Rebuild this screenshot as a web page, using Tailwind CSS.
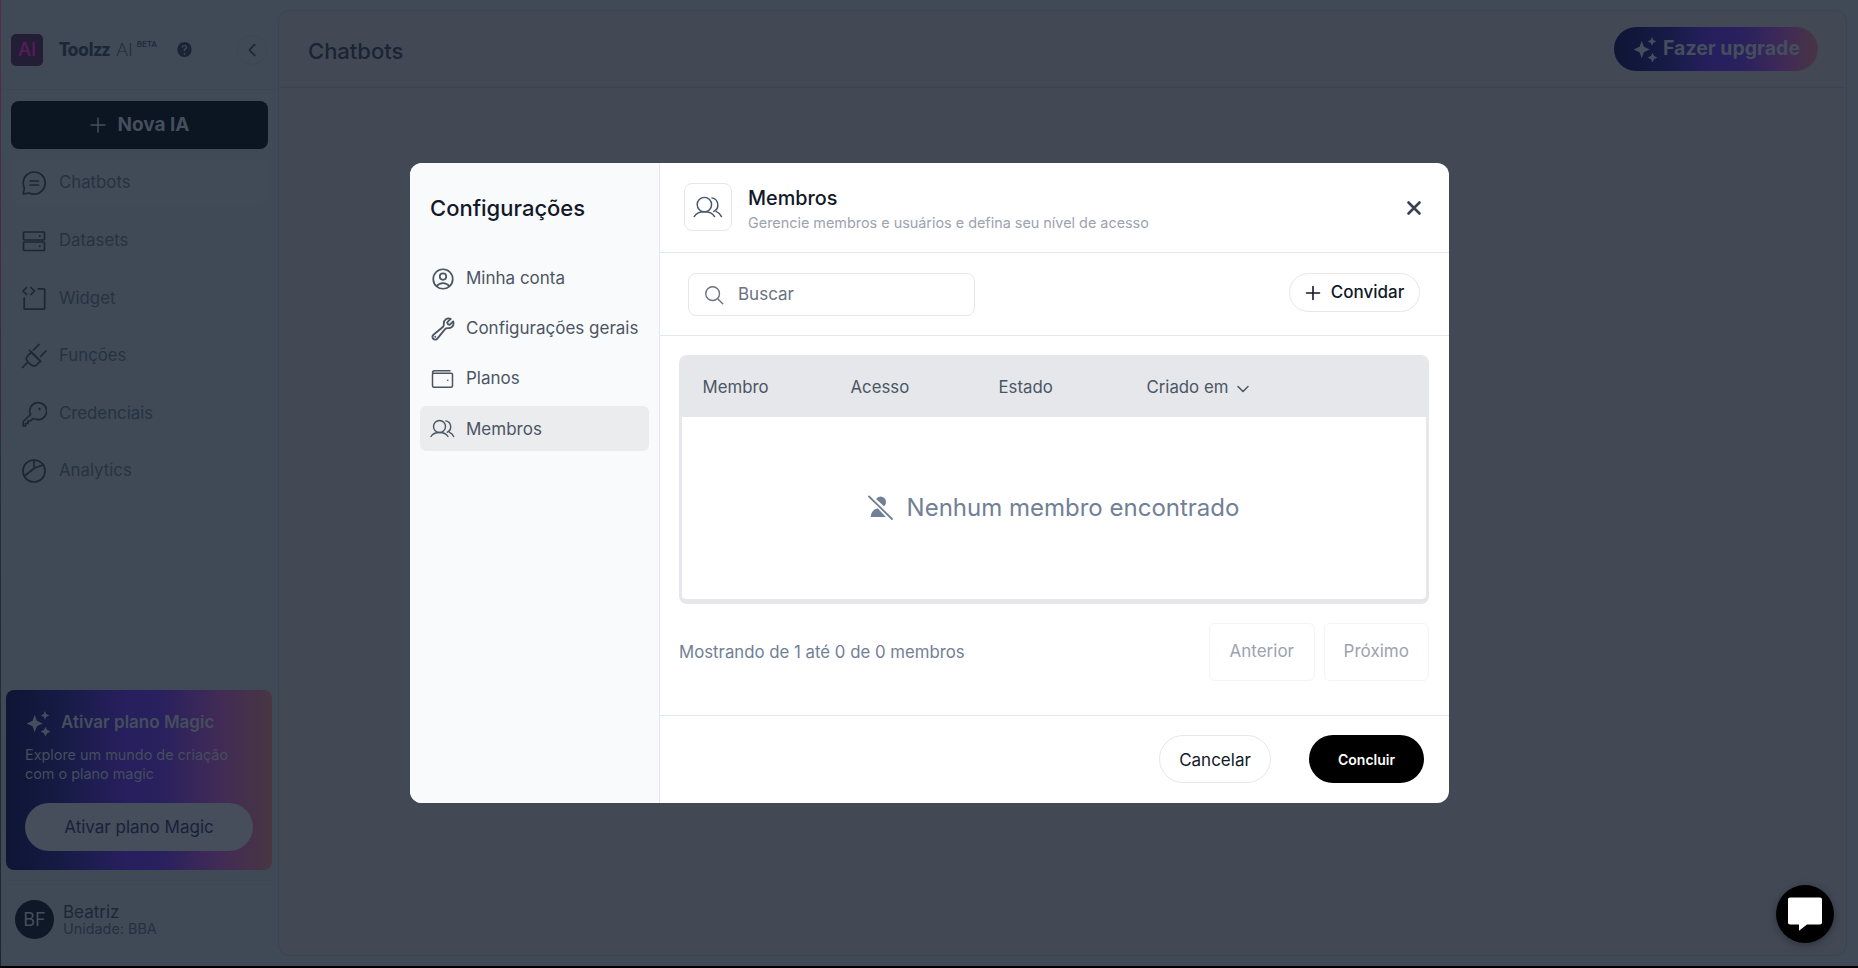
<!DOCTYPE html>
<html lang="pt-BR">
<head>
<meta charset="utf-8">
<script src="https://cdn.jsdelivr.net/npm/@tailwindcss/browser@4"></script>
<title>Toolzz AI</title>
</head>
<body class="overflow-hidden bg-black font-['Inter','Liberation_Sans',sans-serif]">
<div class="relative flex h-[968px] w-[1858px] flex-col overflow-hidden">
  <div class="flex min-h-0 flex-1">
    <div class="w-[1px] shrink-0 bg-gradient-to-b from-[#5a2c48] via-[#2a2c38] to-[#1f2530]"></div>
    <!-- sidebar -->
    <aside class="flex w-[277px] shrink-0 flex-col bg-[#3f4a56]">
      <div class="flex h-[90px] shrink-0 items-center border-b border-[#3c4753] pl-[10px] pt-[10px]">
        <div class="flex h-[32px] w-[32px] shrink-0 items-center justify-center rounded-[5px] bg-[#231d36] text-[18px] font-semibold text-[#541d57]">AI</div>
        <div class="ml-[16px] flex w-[116px] shrink-0 items-start text-[#1c2736]">
          <span class="text-[18px] font-extrabold font-['Lato',sans-serif]">Toolzz</span>
          <span class="ml-[6px] text-[18px] font-light font-['Lato',sans-serif]">AI</span>
          <span class="ml-[4px] mt-[2px] text-[8px] font-medium">BETA</span>
        </div>
        <svg class="ml-[1px] h-[17px] w-[17px] shrink-0" viewBox="0 0 24 24"><path fill="#1a2433" fill-rule="evenodd" d="M12 1.500C6.200 1.500 2 5.900 2 12s4.200 10.500 10 10.500S22 18.100 22 12 17.800 1.500 12 1.500Zm0 15.200a1.300 1.300 0 1 1 0 2.600 1.300 1.300 0 0 1 0-2.600Zm-.1-11.200c2.300 0 3.900 1.300 3.900 3.300 0 1.400-.8 2.200-1.800 2.900-.8.600-1.100.9-1.100 1.700v.6h-2v-.8c0-1.400.6-2.100 1.600-2.800.8-.5 1.300-.9 1.300-1.600 0-.8-.7-1.400-1.800-1.400-1.100 0-1.900.6-2 1.700H8c.1-2.300 1.700-3.600 3.900-3.600Z"/></svg>
        <div class="ml-[44px] flex h-[30px] w-[30px] shrink-0 items-center justify-center rounded-full border border-[#3c4753]">
          <svg class="h-[16px] w-[16px]" viewBox="0 0 24 24" fill="none" stroke="#1a2433" stroke-width="2.400" stroke-linecap="round" stroke-linejoin="round"><path d="M16 4 8 12l8 8"/></svg>
        </div>
      </div>
      <div class="px-[10px] pt-[11px]">
        <div class="flex h-[48px] w-[257px] items-center justify-center gap-[10px] rounded-[8px] bg-[#0c1522] text-[19px] font-bold text-[#454e5c]">
          <svg class="h-[18px] w-[18px]" viewBox="0 0 18 18" fill="none" stroke="#454e5c" stroke-width="1.500"><path d="M9 1.500v15M1.500 9h15"/></svg>
          <span>Nova IA</span>
        </div>
      </div>
      <nav class="mt-[10px] flex flex-col px-[10px] text-[16.800px] text-[#273241]">
        <div class="flex h-[47px] items-center gap-[12px] rounded-[8px] bg-[#404b57] pl-[10px]">
          <svg class="h-[26px] w-[26px] shrink-0" viewBox="0 0 26 26" fill="none" stroke="#1c2736" stroke-width="1.700" stroke-linecap="round" stroke-linejoin="round"><path d="M13.200 2C7 2 2.200 6.800 2.200 13c0 1.800.4 3.500 1.200 5l-1.200 5.200c-.1.500.2.800.7.700l5.100-.9c1.500.8 3.300 1.200 5.200 1.200 6.100 0 11-5 11-11.200S19.300 2 13.200 2Z"/><path d="M9 11h8.500M9 15h8.500"/></svg>
          <span>Chatbots</span>
        </div>
        <div class="mt-[11px] flex h-[47px] items-center gap-[12px] pl-[10px]">
          <svg class="h-[26px] w-[26px] shrink-0" viewBox="0 0 26 26" fill="none" stroke="#1c2736" stroke-width="1.700"><rect x="2.500" y="4" width="21" height="8" rx="1"/><rect x="2.500" y="14" width="21" height="8.500" rx="1"/><circle cx="18.800" cy="8" r="1" fill="#1c2736" stroke="none"/><circle cx="18.800" cy="18.200" r="1" fill="#1c2736" stroke="none"/></svg>
          <span>Datasets</span>
        </div>
        <div class="mt-[11px] flex h-[47px] items-center gap-[12px] pl-[10px]">
          <svg class="h-[26px] w-[26px] shrink-0" viewBox="0 0 26 26" fill="none" stroke="#1c2736" stroke-width="1.700" stroke-linecap="round" stroke-linejoin="round"><path d="M5.500 1.500 2 5l3.500 3.500M10 1.500 13.500 5 10 8.500"/><path d="M3.200 12v10.500c0 .4.300.7.700.7H23c.4 0 .7-.3.700-.7V3.500c0-.4-.3-.7-.7-.7h-5.700"/></svg>
          <span>Widget</span>
        </div>
        <div class="mt-[10px] flex h-[47px] items-center gap-[12px] pl-[10px]">
          <svg class="h-[26px] w-[26px] shrink-0" viewBox="0 0 26 26" fill="none" stroke="#1c2736" stroke-width="1.700" stroke-linecap="round" stroke-linejoin="round"><path d="m1.500 24.500 5.500-5.500M7 19c-2-2-2.200-4.300-.5-6l4-4 9 9-4 4c-1.700 1.700-4.500 1-6.500-1Z"/><path d="m18 1.500-5.500 5.500M25 8l-5.500 5.500M8.500 7.500l11 11"/></svg>
          <span>Funções</span>
        </div>
        <div class="mt-[11px] flex h-[47px] items-center gap-[12px] pl-[10px]">
          <svg class="h-[26px] w-[26px] shrink-0" viewBox="0 0 26 26" fill="none" stroke="#1c2736" stroke-width="1.700" stroke-linecap="round" stroke-linejoin="round"><path d="M9.300 13.300A8.500 8.500 0 1 1 14 18c-.8 0-1.600-.1-2.300-.3L9.500 20H7v2.500H4.500V25H2.200v-4.500l7.400-7Z"/><circle cx="18.500" cy="8" r="1.200" fill="#1c2736" stroke="none"/></svg>
          <span>Credenciais</span>
        </div>
        <div class="mt-[10px] flex h-[47px] items-center gap-[12px] pl-[10px]">
          <svg class="h-[26px] w-[26px] shrink-0" viewBox="0 0 26 26" fill="none" stroke="#1c2736" stroke-width="1.700" stroke-linecap="round" stroke-linejoin="round"><circle cx="13" cy="13" r="11"/><path d="M13 2v8.200M13 10.200l9.500-3.500M13 10.500 3.500 18"/></svg>
          <span>Analytics</span>
        </div>
      </nav>
      <div class="mt-auto px-[5px] pb-[10px]">
        <div class="flex h-[180px] w-[266px] flex-col rounded-[8px] bg-[linear-gradient(90deg,#0f1535_0%,#141a42_18%,#271f5e_45%,#29205e_58%,#412b56_80%,#483642_100%)] px-[19px]">
          <div class="mt-[20px] flex h-[26px] items-center gap-[9px]">
            <svg class="h-[27px] w-[27px] shrink-0" viewBox="0 0 25 25" fill="#454e5c"><path d="M9 4.500 11 10l5.500 2.500L11 15l-2 5.500L7 15l-5.500-2.500L7 10Z"/><path d="M18.500 1 19.700 3.800 22.500 5l-2.800 1.200-1.200 2.800-1.200-2.800L14.500 5l2.800-1.200Z"/><path d="M19 15.500l1.500 3 3 1.500-3 1.500-1.500 3-1.500-3-3-1.500 3-1.500Z"/></svg>
            <span class="text-[17px] font-semibold text-[#454e5c] whitespace-nowrap">Ativar plano Magic</span>
          </div>
          <p class="mt-[9px] text-[14.400px] leading-[19px] text-[#454e5c]">Explore um mundo de criação<br>com o plano magic</p>
          <div class="mt-[20px] flex h-[48px] w-[228px] items-center justify-center rounded-full bg-[#464d5b] pt-[1px] text-[17px] text-[#17223a]">Ativar plano Magic</div>
        </div>
        <div class="mt-[10px] flex h-[76px] items-center gap-[9px] border-t border-[#3c4753] pb-[7px] pl-[9px] pt-[8px]">
          <div class="flex h-[39px] w-[39px] shrink-0 items-center justify-center rounded-full bg-[#0e1827] text-[18px] text-[#454e5c]">BF</div>
          <div class="flex flex-col pt-[1px]">
            <span class="text-[17px] leading-[17px] text-[#1c2736]">Beatriz</span>
            <span class="text-[14.400px] leading-[15px] text-[#253040]">Unidade: BBA</span>
          </div>
        </div>
      </div>
    </aside>
    <!-- main -->
    <main class="min-w-0 flex-1 bg-[#3f4a56] pb-[10px] pr-[11px] pt-[10px]">
      <div class="h-full rounded-[12px] border border-[#3a4551] bg-[#424955]">
        <header class="flex h-[77px] items-center justify-between border-b border-[#3a4551] pl-[29px] pr-[28px]">
          <h1 class="mt-[4px] text-[22px] font-medium text-[#1a2433]">Chatbots</h1>
          <div class="flex h-[44px] w-[204px] items-center justify-center gap-[4px] rounded-full bg-[linear-gradient(90deg,#0f1535_0%,#141a42_22%,#271f5e_48%,#29205e_62%,#412b56_85%,#483642_100%)] text-[19.500px] font-bold text-[#454e5c]">
            <svg class="h-[27px] w-[27px] shrink-0" viewBox="0 0 25 25" fill="#454e5c"><path d="M9 4.500 11 10l5.500 2.500L11 15l-2 5.500L7 15l-5.500-2.500L7 10Z"/><path d="M18.500 1 19.700 3.800 22.500 5l-2.800 1.200-1.200 2.800-1.200-2.800L14.500 5l2.800-1.200Z"/><path d="M19 15.500l1.500 3 3 1.500-3 1.500-1.500 3-1.500-3-3-1.500 3-1.500Z"/></svg>
            <span class="whitespace-nowrap">Fazer upgrade</span>
          </div>
        </header>
      </div>
    </main>
  </div>
  <div class="h-[2px] shrink-0 bg-black"></div>

  <!-- modal -->
  <div class="absolute left-[410px] top-[163px] flex h-[640px] w-[1039px] overflow-hidden rounded-[12px] bg-white">
    <div class="flex w-[250px] shrink-0 flex-col border-r border-[#e5e7eb] bg-[#f9fafb] px-[10px]">
      <h2 class="ml-[10px] mt-[31px] text-[22px] leading-[28px] font-medium text-[#111827]">Configurações</h2>
      <div class="mt-[34px] flex flex-col text-[17px] text-[#4b5563]">
        <div class="flex h-[45px] items-center gap-[10px] pl-[10px]">
          <svg class="h-[26px] w-[26px] shrink-0" viewBox="0 0 24 24" fill="none" stroke="#4b5563" stroke-width="1.600" stroke-linecap="round" stroke-linejoin="round"><path d="M17.982 18.725A7.488 7.488 0 0 0 12 15.750a7.488 7.488 0 0 0-5.982 2.975m11.963 0a9 9 0 1 0-11.963 0m11.963 0A8.966 8.966 0 0 1 12 21a8.966 8.966 0 0 1-5.982-2.275M15 9.750a3 3 0 1 1-6 0 3 3 0 0 1 6 0Z"/></svg>
          <span>Minha conta</span>
        </div>
        <div class="mt-[5px] flex h-[45px] items-center gap-[10px] pl-[10px]">
          <svg class="h-[26px] w-[26px] shrink-0" viewBox="0 0 24 24" fill="none" stroke="#4b5563" stroke-width="1.700" stroke-linecap="round" stroke-linejoin="round"><path d="M21.750 6.750a4.500 4.500 0 0 1-4.884 4.484c-1.076-.091-2.264.071-2.950.904l-7.152 8.684a2.548 2.548 0 1 1-3.586-3.586l8.684-7.152c.833-.686.995-1.874.904-2.950a4.500 4.500 0 0 1 6.336-4.486l-3.276 3.276a3.004 3.004 0 0 0 2.250 2.250l3.276-3.276c.256.565.398 1.192.398 1.852Z"/><path d="M4.867 19.125h.008v.008h-.008v-.008Z"/></svg>
          <span class="whitespace-nowrap">Configurações gerais</span>
        </div>
        <div class="mt-[5px] flex h-[45px] items-center gap-[11px] pl-[10px]">
          <svg class="h-[25px] w-[25px] shrink-0" viewBox="0 0 25 25" fill="none" stroke="#4b5563" stroke-width="1.500" stroke-linecap="round" stroke-linejoin="round"><path d="M2.500 7c0-1.300.8-2.300 2-2.300h15.500"/><rect x="2.500" y="7.300" width="20" height="14" rx="1.500"/><circle cx="17.800" cy="14.300" r=".8" fill="#4b5563" stroke="none"/></svg>
          <span>Planos</span>
        </div>
        <div class="mt-[5px] flex h-[45px] items-center gap-[11px] rounded-[6px] bg-[#ebecee] pl-[10px] pt-[2px]">
          <svg class="mt-[-2px] h-[25px] w-[25px] shrink-0" viewBox="0 0 25 25" fill="none" stroke="#4b5563" stroke-width="1.400" stroke-linecap="round" stroke-linejoin="round"><circle cx="9.500" cy="10.500" r="6"/><path d="M1 20.500c1.500-2.500 4.500-4 8.500-4s7 1.500 8.500 4M15.800 4.900a6 6 0 0 1 1.500 11.300M19.500 16.300c1.900.7 3.300 2.200 4.200 4.200"/></svg>
          <span>Membros</span>
        </div>
      </div>
    </div>
    <div class="flex min-w-0 flex-1 flex-col">
      <div class="flex h-[90px] shrink-0 items-center border-b border-[#e5e7eb] pb-[1px] pl-[24px] pr-[24px]">
        <div class="flex h-[48px] w-[48px] shrink-0 items-center justify-center rounded-[8px] border border-[#e5e7eb]">
          <svg class="h-[30px] w-[30px]" viewBox="0 0 25 25" fill="none" stroke="#475569" stroke-width="1.200" stroke-linecap="round" stroke-linejoin="round"><circle cx="9.500" cy="10.500" r="6"/><path d="M1 20.500c1.500-2.500 4.500-4 8.500-4s7 1.500 8.500 4M15.800 4.900a6 6 0 0 1 1.500 11.300M19.500 16.300c1.900.7 3.300 2.200 4.200 4.200"/></svg>
        </div>
        <div class="ml-[16px] flex flex-col pt-[3px]">
          <span class="text-[19.800px] leading-[26px] font-medium text-[#111827]">Membros</span>
          <span class="mt-[2px] text-[14.400px] leading-[20px] text-[#9ca3af]">Gerencie membros e usuários e defina seu nível de acesso</span>
        </div>
        <svg class="ml-auto h-[22px] w-[22px]" viewBox="0 0 22 22" fill="none" stroke="#374151" stroke-width="2.600" stroke-linecap="round"><path d="m5.500 6.500 11 11M16.500 6.500l-11 11"/></svg>
      </div>
      <div class="flex h-[83px] shrink-0 items-start justify-between border-b border-[#e5e7eb] pl-[28px] pr-[29px] pt-[20px]">
        <div class="flex h-[43px] w-[287px] items-center rounded-[8px] border border-[#e5e7eb] pl-[14px] text-[17px] text-[#6b7280]">
          <svg class="h-[22px] w-[22px] shrink-0" viewBox="0 0 24 24" fill="none" stroke="#6b7280" stroke-width="1.500" stroke-linecap="round"><circle cx="10.500" cy="10.500" r="7.500"/><path d="m16 16 5.500 5.500"/></svg>
          <span class="ml-[13px]">Buscar</span>
        </div>
        <div class="flex h-[39px] w-[131px] items-center justify-center gap-[10px] rounded-full border border-[#e5e7eb] text-[17px] font-medium text-[#111827]">
          <svg class="h-[16px] w-[16px]" viewBox="0 0 16 16" fill="none" stroke="#111827" stroke-width="1.600" stroke-linecap="round"><path d="M8 1.500v13M1.500 8h13"/></svg>
          <span>Convidar</span>
        </div>
      </div>
      <div class="pl-[19px] pr-[20px] pt-[19px]">
        <div class="flex h-[249px] w-[750px] flex-col overflow-hidden rounded-[8px] border-x-[3px] border-b-[5px] border-[#e5e7eb] bg-white">
          <div class="grid h-[62px] shrink-0 grid-cols-[148px_148px_148px_1fr] items-center bg-[#e5e7eb] pl-[20.500px] pt-[3px] text-[16.800px] text-[#4b5563]">
            <span>Membro</span>
            <span>Acesso</span>
            <span>Estado</span>
            <span class="flex items-center gap-[8px]">Criado em
              <svg class="mt-[2px] h-[14px] w-[14px]" viewBox="0 0 14 14" fill="none" stroke="#4b5563" stroke-width="1.500" stroke-linecap="round" stroke-linejoin="round"><path d="m2 4.500 5 5 5-5"/></svg>
            </span>
          </div>
          <div class="flex flex-1 items-center justify-center gap-[14px] pb-[1px] pr-[1px] text-[24px] text-[#718096]">
            <svg class="h-[25px] w-[25px] shrink-0" viewBox="0 0 25 25"><path fill="#718096" d="M12.500 1.500a5.500 5.500 0 0 1 5.500 5.500c0 1.800-.8 3.300-2.100 4.300L8.100 4a5.500 5.500 0 0 1 4.400-2.500ZM3 21c0-3.700 3-6.800 6.800-7.700l8 8.700H3.500a.5.500 0 0 1-.5-1Z"/><path stroke="#718096" stroke-width="1.800" stroke-linecap="round" d="M1 1.500 24 24"/></svg>
            <span>Nenhum membro encontrado</span>
          </div>
        </div>
        <div class="mt-[19px] flex items-center justify-between">
          <span class="pt-[1px] text-[16.800px] text-[#718096]">Mostrando de 1 até 0 de 0 membros</span>
          <div class="flex gap-[9px] text-[17px] text-[#9ca3af]">
            <div class="flex h-[58px] w-[105.500px] items-center justify-center rounded-[6px] border border-[#f3f4f6]">Anterior</div>
            <div class="flex h-[58px] w-[105.500px] items-center justify-center rounded-[6px] border border-[#f3f4f6]">Próximo</div>
          </div>
        </div>
      </div>
      <div class="mt-[34px] flex h-[87px] shrink-0 items-start justify-end gap-[38px] border-t border-[#e5e7eb] pr-[25px] pt-[19px]">
        <div class="flex h-[48px] w-[112px] items-center justify-center rounded-full border border-[#e5e7eb] pt-[3px] text-[17px] text-[#111827]">Cancelar</div>
        <div class="flex h-[48px] w-[115px] items-center justify-center rounded-full bg-black text-[14px] font-semibold text-white">Concluir</div>
      </div>
    </div>
  </div>

  <!-- chat launcher -->
  <div class="absolute left-[1776px] top-[885px] flex h-[58px] w-[58px] items-center justify-center rounded-full bg-black shadow-[0_2px_8px_rgba(0,0,0,0.3)]">
    <svg class="h-[36px] w-[36px]" viewBox="0 0 36 36"><path fill="#fff" d="M3 1.500h30c1.200 0 2 .9 2 2v23c0 1.200-.8 2-2 2H20l-8 6.300V28.500H3c-1.200 0-2-.8-2-2v-23c0-1.100.8-2 2-2Z"/></svg>
  </div>
</div>
</body>
</html>
